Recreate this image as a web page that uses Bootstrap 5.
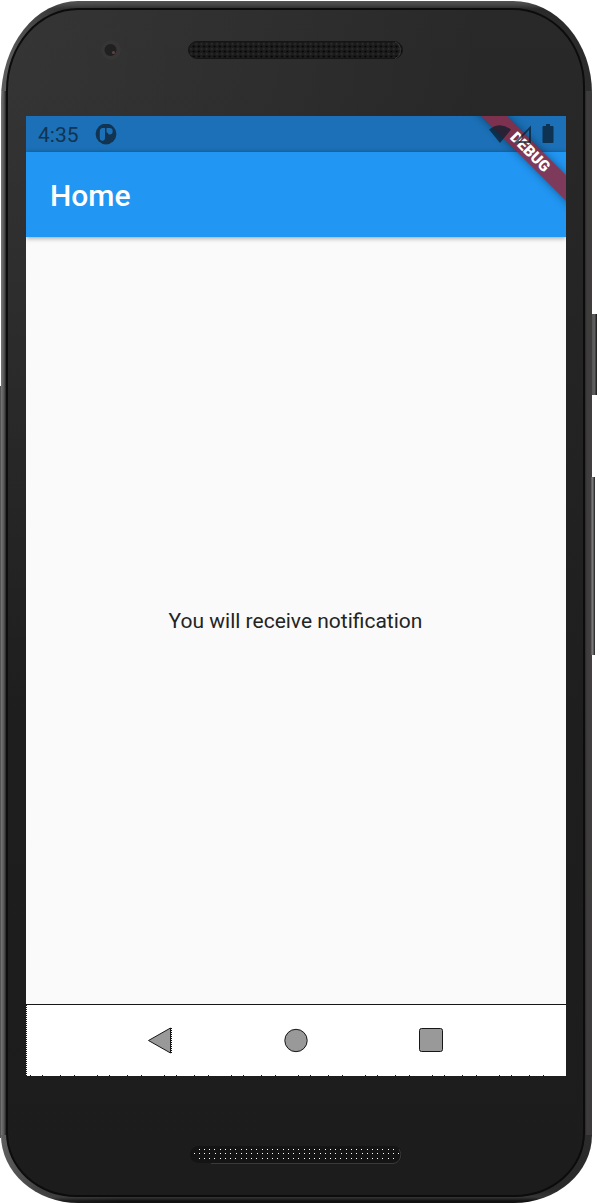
<!DOCTYPE html>
<html lang="en">
<head>
<meta charset="utf-8">
<meta name="viewport" content="width=device-width, initial-scale=1">
<title>Home</title>
<link href="https://cdn.jsdelivr.net/npm/bootstrap@5.3.0/dist/css/bootstrap.min.css" rel="stylesheet">
<style>
body{background:#fff;font-family:Roboto,"Noto Sans",sans-serif;width:597px;height:1204px;overflow:hidden}
.phone{width:591px;height:1202px;margin:1px 0 0 1px;padding:7px 7px 6px 5px;border-radius:77px 79px 78px 77px/98px 92px 68px 68px;background:linear-gradient(90deg,#777 0,#555 3px,#222 5px,transparent 6px,transparent 583px,#2a2a2a 584px,#403c3d 586px,#4a474880 590px) 0 90px/100% 1044px no-repeat,linear-gradient(90deg,#777a 0,#6662 60px,transparent 120px),linear-gradient(#525452 0,#444 4px,#2a2a2a 8px,#383838 50%,#2a2a2a 1190px,#363636 1196px,#111 1200px)}
.face{border:2px solid #0c0c0c;border-radius:72px 72px 70px 70px/82px 78px 64px 64px;background:radial-gradient(ellipse 480px 640px at 0 60px,rgba(255,255,255,.06),transparent),linear-gradient(#292929,#232323 400px,#1e1e1e 60%,#1c1c1c);padding:0 16px 0 18px}
.brow{height:106px;flex:none}
.chin{height:119px;flex:none}
.screen{width:540px;height:960px;background:#fafafa}
.status{height:36px;background:#1b70b7;color:#123450;font-size:21px;line-height:36px;padding:2px 12px 0}
.signals{z-index:2;opacity:.72}
.appbar{height:84.5px;background:#2196f3;font-size:30px;font-weight:500;line-height:88px;padding-left:24px;box-shadow:0 1px 5px #0006}
.msg{font-size:21px;color:#242424;height:767.5px;padding:2px 1px 0 0}
.navkeys{height:72px;border-top:1px solid #171717;background:#fff}
.debug-tag{z-index:1;width:150px;height:18px;left:429.2px;top:26.8px;transform:rotate(45deg);background:rgba(149,35,52,.8);color:#fff;font-size:15.3px;font-weight:900;line-height:18px;box-shadow:0 0 9px #0006}
.power{top:314px;width:5px;height:81px;right:0;background:linear-gradient(90deg,#555 0,#626162 3px,#242424 4px)}
.volume{top:477px;width:4px;height:178px;right:2px;background:linear-gradient(90deg,#555,#858586 2px,#333 3px)}
.edge-left{top:386px;width:1px;height:752px;left:0;background:#555}
</style>
</head>
<body class="position-relative">
<div class="phone d-flex">
  <div class="face d-flex flex-column flex-grow-1">
    <div class="brow position-relative">
      <svg class="position-absolute" style="left:75px;top:30px" width="22" height="22"><circle cx="10" cy="10" r="10" fill="#373536"/><circle cx="9.5" cy="10" r="6" fill="#202020"/><circle cx="12.5" cy="12.5" r="1.6" fill="#5c4243"/></svg>
      <svg class="position-absolute" style="left:161px;top:30px" width="218" height="21">
        <defs><pattern id="mesh" width="5.2" height="5" patternUnits="userSpaceOnUse"><rect width="5.2" height="5" fill="#1c1c1c"/><circle cx="1.5" cy="1.5" r="1.1" fill="#050505"/><circle cx="4" cy="4" r="1" fill="#2c2c2c"/></pattern></defs>
        <rect x="1.5" y="1.5" width="214" height="17" rx="8.5" fill="url(#mesh)" stroke="#151515"/><path d="M208 2a9 9 0 0 1 0 16.5" fill="none" stroke="#383838"/>
      </svg>
    </div>
    <main class="screen position-relative overflow-hidden flex-shrink-0">
      <div class="status d-flex align-items-center justify-content-between">
        <div class="d-flex align-items-center"><span>4:35</span>
          <svg class="ms-3" width="23" height="22" viewBox="0 0 23 22"><circle cx="11" cy="10" r="10.4" fill="#123450"/><path d="M4.8 7.5Q5 4 7.5 4H10v9.5q0 3.2-2.6 3.2-2.6 0-2.6-3.2ZM11.5 4h3a3 3 0 0 1 0 6.4q-1.5 0-1.5-1.5-1.5 0-1.5-1.5Z" fill="#1b70b7"/></svg>
        </div>
        <svg class="signals position-relative" width="66" height="22" viewBox="0 0 66 22" fill="#0a1c2c"><path d="M1 5.5Q12-3 23 5.5L12 19Z"/><path d="M26 19 43 1.5V19Zm4.5-2H41V6Z" fill-rule="evenodd"/><path d="M54.5 3q0-1 1-1H58V0h4v2h2.5q1 0 1 1v15q0 1-1 1h-9q-1 0-1-1Z"/></svg>
      </div>
      <header class="appbar text-white position-relative">Home</header>
      <div class="msg d-flex align-items-center justify-content-center">You will receive notification</div>
      <nav class="navkeys position-relative">
        <svg class="d-block" width="540" height="71" fill="#999" stroke="#171717"><path d="M122.5 35.5 144.5 23v25Z"/><path d="M145.5 23v25M.5 0v71" stroke-dasharray="1 1"/><path d="M4 70.5H540" stroke-dasharray="1 11 1 17 1 13 1 22"/><circle cx="270" cy="35.5" r="11.2"/><rect x="393.5" y="23.5" width="23" height="23" rx="2"/></svg>
      </nav>
      <div class="debug-tag position-absolute text-center">DEBUG</div>
    </main>
    <div class="chin position-relative">
      <svg class="position-absolute" style="left:163px;top:69px" width="216" height="21">
        <rect x="1" y="1" width="212" height="17" rx="8.5" fill="#141414"/>
        <g stroke="#fff" stroke-dasharray="1 4 1 4 1 4 1 5" shape-rendering="crispEdges"><path d="M10 4.5H206M5 8.5H211M10 13.5H206"/></g>
        <path d="M22 18.5H204A9 9 0 0 0 210 4" fill="none" stroke="#3a3a3a"/>
      </svg>
    </div>
  </div>
</div>
<div class="power position-absolute"></div><div class="volume position-absolute"></div><div class="edge-left position-absolute"></div>
<script src="https://cdn.jsdelivr.net/npm/bootstrap@5.3.0/dist/js/bootstrap.bundle.min.js"></script>
</body>
</html>
